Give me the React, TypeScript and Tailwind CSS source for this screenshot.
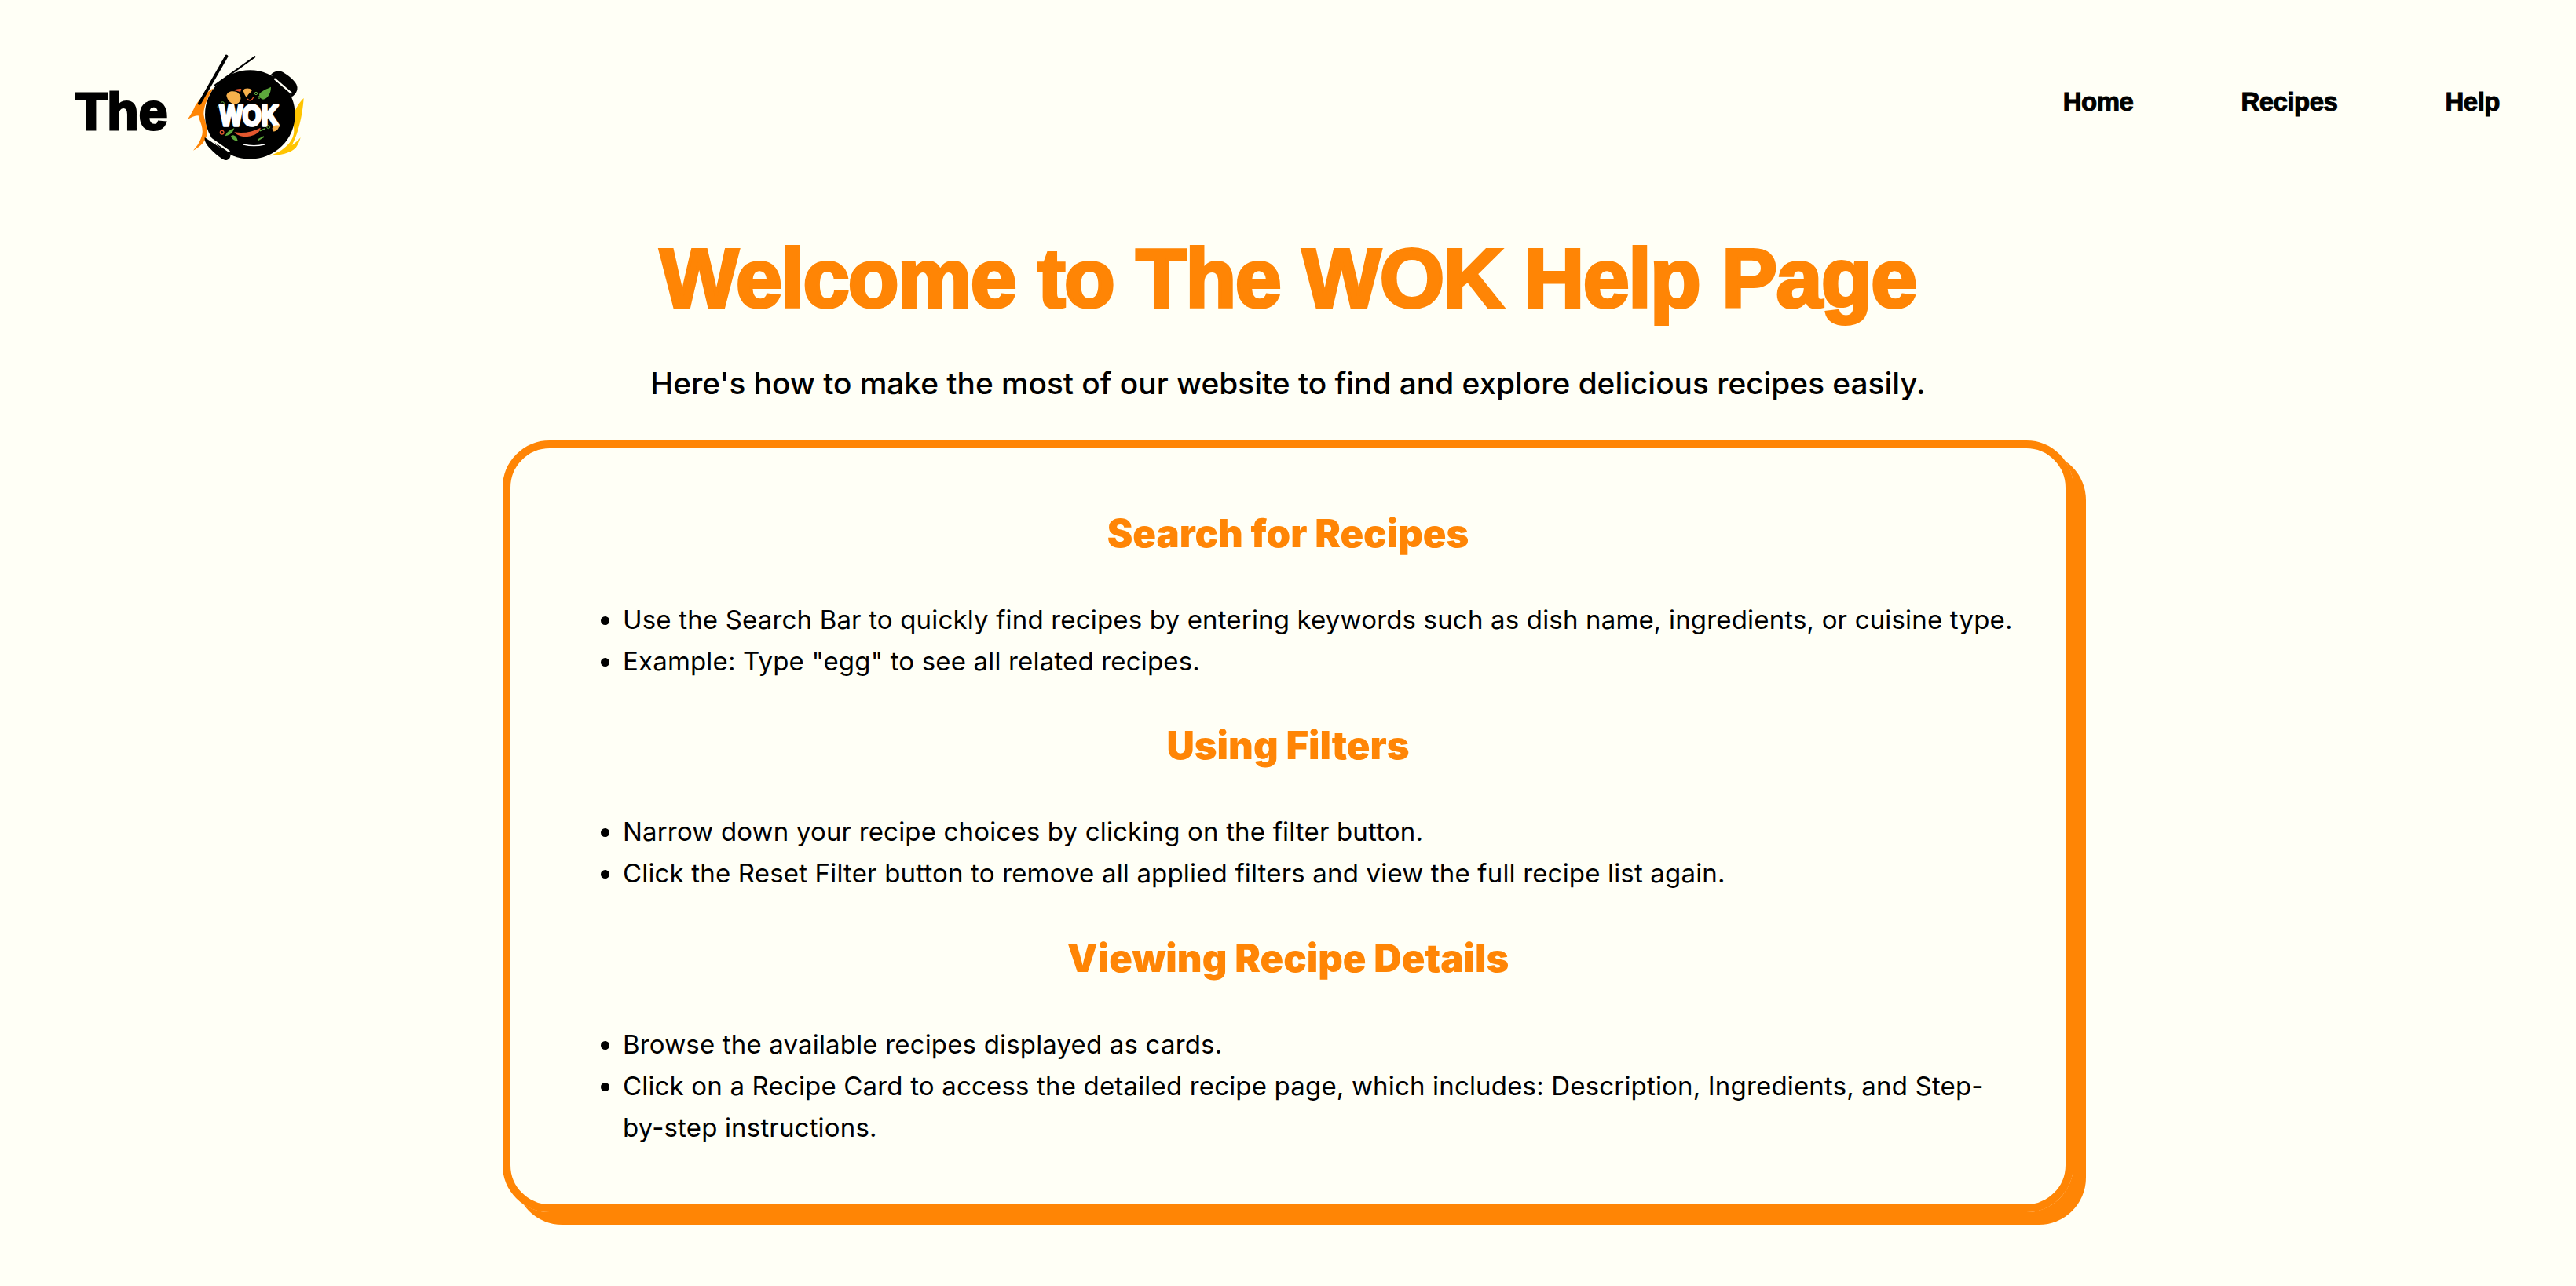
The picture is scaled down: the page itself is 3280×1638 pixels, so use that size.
const sections = [
  {
    title: 'Search for Recipes',
    items: [
      'Use the Search Bar to quickly find recipes by entering keywords such as dish name, ingredients, or cuisine type.',
      'Example: Type "egg" to see all related recipes.',
    ],
  },
  {
    title: 'Using Filters',
    items: [
      'Narrow down your recipe choices by clicking on the filter button.',
      'Click the Reset Filter button to remove all applied filters and view the full recipe list again.',
    ],
  },
  {
    title: 'Viewing Recipe Details',
    items: [
      'Browse the available recipes displayed as cards.',
      'Click on a Recipe Card to access the detailed recipe page, which includes: Description, Ingredients, and Step-by-step instructions.',
    ],
  },
];

function WokLogo() {
  return (
    <svg width="170" height="150" viewBox="0 0 510 450" className="block shrink-0">
      {/* flames */}
      <path d="M125 157 C95 175 70 200 55 225 C45 250 35 262 28 275 C42 268 55 262 68 262 C72 285 88 305 82 335 C76 360 62 380 48 395 C70 385 95 362 100 335 C105 305 90 280 88 255 C88 225 105 190 125 157 Z" fill="#ff8505" />
      <path d="M470 195 C450 215 436 240 430 265 C426 295 440 315 428 345 C415 375 385 400 340 415 C380 415 420 405 440 385 C448 372 455 358 458 345 C450 355 440 365 425 375 C445 340 465 270 470 195 Z" fill="#ffc400" />
      {/* chopsticks */}
      <path d="M175 35 L72 215" stroke="#000" strokeWidth="12" strokeLinecap="round" />
      <path d="M283 37 L132 145" stroke="#000" strokeWidth="7" strokeLinecap="round" />
      {/* wok */}
      <path d="M345 105 C355 92 375 88 390 95 C415 110 440 130 445 150 C448 165 440 180 425 190 Z" fill="#000" />
      <path d="M92 345 C90 360 100 375 115 390 C130 405 150 425 170 432 C185 432 192 420 190 410 Z" fill="#000" />
      <ellipse cx="265" cy="258" rx="172" ry="170" fill="#000" />
      <path d="M360 122 L422 175" stroke="#fffff6" strokeWidth="7" strokeLinecap="round" />
      <path d="M118 352 L185 398" stroke="#fffff6" strokeWidth="7" strokeLinecap="round" />
      <path d="M240 372 C265 378 295 378 320 372" stroke="#fff" strokeWidth="4" fill="none" strokeLinecap="round" />
      {/* toppings above */}
      <path d="M175 185 C178 168 200 165 215 172 C230 180 235 200 222 212 C205 225 180 212 175 185 Z" fill="#f7b04c" />
      <path d="M205 165 C215 160 225 158 232 160 L228 172 C220 168 212 168 205 165 Z" fill="#e4572e" />
      <path d="M238 165 C245 155 265 155 272 165 C270 175 258 175 254 190 C246 190 244 178 238 165 Z" fill="#f7b04c" />
      <path d="M255 198 C262 207 272 205 278 192" stroke="#e4572e" strokeWidth="4" fill="none" />
      <path d="M300 180 C310 165 330 160 345 152 C345 175 335 195 315 200 C305 198 300 190 300 180 Z" fill="#5da83c" />
      <circle cx="288" cy="177" r="5" fill="none" stroke="#5da83c" strokeWidth="3" />
      <circle cx="300" cy="192" r="4" fill="none" stroke="#5da83c" strokeWidth="3" />
      <circle cx="160" cy="215" r="6" fill="none" stroke="#5da83c" strokeWidth="3" />
      <circle cx="145" cy="228" r="4" fill="none" stroke="#5da83c" strokeWidth="3" />
      <text x="262" y="300" textAnchor="middle" fontFamily="'Liberation Sans', sans-serif" fontWeight="700" fontSize="108" textLength="226" lengthAdjust="spacingAndGlyphs" fill="#fff" stroke="#fff" strokeWidth="10" strokeLinejoin="round">WOK</text>
      {/* toppings below */}
      <circle cx="158" cy="326" r="7" fill="none" stroke="#e4572e" strokeWidth="4" />
      <path d="M170 340 C175 325 190 315 205 310 C200 325 190 338 170 340 Z" fill="#5da83c" />
      <path d="M192 340 C205 330 215 345 218 358 C205 358 195 352 192 340 Z" fill="#5da83c" />
      <path d="M205 325 C240 330 275 325 305 308 C305 325 285 338 255 342 C235 344 215 338 205 325 Z" fill="#e4572e" />
      <path d="M302 320 L322 312" stroke="#5da83c" strokeWidth="5" />
      <circle cx="335" cy="305" r="6" fill="none" stroke="#5da83c" strokeWidth="3" />
      <path d="M350 310 C355 295 365 300 378 298 C375 312 365 325 352 322 Z" fill="#f7b04c" />
      <path d="M295 355 L318 342" stroke="#5da83c" strokeWidth="6" />
    </svg>
  );
}

export default function App() {
  return (
    <div className="min-h-[1638px] bg-[#fffff6] font-['Inter',sans-serif] text-black">
      <nav className="flex items-center justify-between pl-[96px] pr-[97px] pt-[60px]">
        <div className="flex items-center gap-[16px]">
          <span className="mt-[14px] w-[118px] font-['Liberation_Sans',sans-serif] text-[66px] font-bold leading-none [-webkit-text-stroke:3px_#000]">The</span>
          <WokLogo />
        </div>
        <ul className="-mt-[10px] flex items-center gap-[137px] font-['Liberation_Sans',sans-serif] text-[33px] font-bold tracking-[-0.5px] [-webkit-text-stroke:1px_#000]">
          <li>Home</li>
          <li>Recipes</li>
          <li>Help</li>
        </ul>
      </nav>

      <main className="flex flex-col items-center">
        <h1 className="mt-[81px] font-['Liberation_Sans',sans-serif] text-[106px] font-bold leading-[1.2] tracking-[-1.5px] text-[#ff8505] [-webkit-text-stroke:4px_#ff8505]">
          Welcome to The WOK Help Page
        </h1>
        <p className="mt-[41px] text-[38.8px] font-medium leading-[1.5]">
          Here's how to make the most of our website to find and explore delicious recipes easily.
        </p>

        <section className="mt-[43.5px] w-[2000px] rounded-[60px] border-[10px] border-[#ff8505] px-[60px] pb-[18px] pt-[81px] shadow-[16px_16px_0_#ff8505]">
          {sections.map((section) => (
            <div key={section.title}>
              <h2 className="mb-[55px] text-center text-[49px] font-black leading-[56px] text-[#ff8505]">{section.title}</h2>
              <ul className="mb-[54px] list-disc pl-[83px] text-[33px] leading-[52.8px] tracking-[0.17px]">
                {section.items.map((item) => (
                  <li key={item}>{item}</li>
                ))}
              </ul>
            </div>
          ))}
        </section>
      </main>
    </div>
  );
}
